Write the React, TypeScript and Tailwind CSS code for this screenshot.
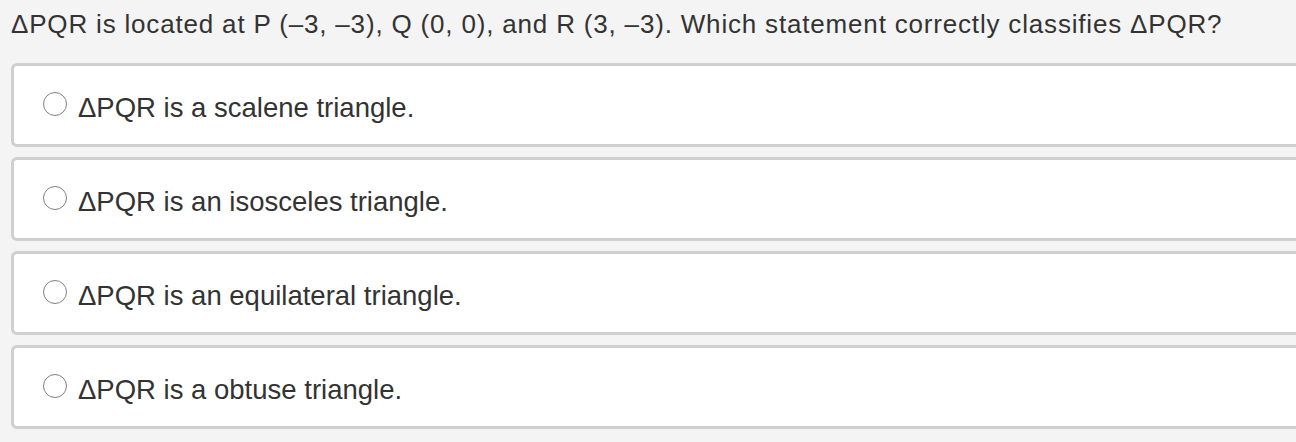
const options = [
  "ΔPQR is a scalene triangle.",
  "ΔPQR is an isosceles triangle.",
  "ΔPQR is an equilateral triangle.",
  "ΔPQR is a obtuse triangle.",
];

export default function App() {
  return (
    <div className="w-[1296px] h-[442px] overflow-hidden bg-[#f4f4f4] font-['Liberation_Sans',Arial,sans-serif] text-[#333]">
      {/* Question */}
      <div className="pl-[11px] pt-[8px] h-[63px] text-[26px] leading-[32px] tracking-[0.82px] whitespace-nowrap">
        ΔPQR is located at P (–3, –3), Q (0, 0), and R (3, –3). Which statement correctly classifies ΔPQR?
      </div>

      {/* Options */}
      <div className="flex flex-col gap-[10px] pl-[11px]">
        {options.map((text) => (
          <label
            key={text}
            className="flex items-center h-[84px] w-[1320px] shrink-0 bg-white border-[3px] border-[#cfcfcf] rounded-[6px] pl-[29px] cursor-pointer"
          >
            <span className="w-[24px] h-[24px] rounded-full border-[1.5px] border-[#808080] bg-white shrink-0 -mt-[2px]" />
            <span className="ml-[11px] mt-[6px] text-[27.5px] leading-[32px] whitespace-nowrap">{text}</span>
          </label>
        ))}
      </div>
    </div>
  );
}
